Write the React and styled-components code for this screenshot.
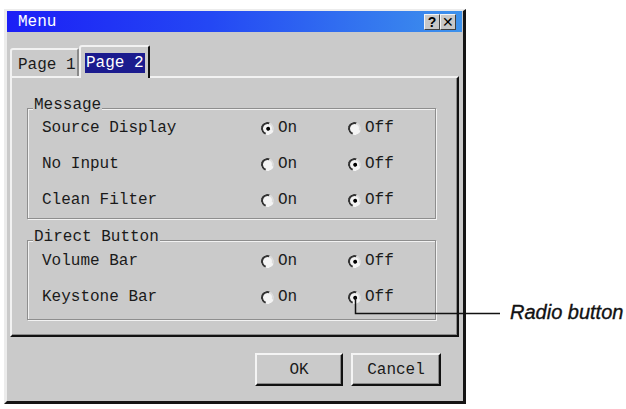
import React from "react";
import styled, { createGlobalStyle } from "styled-components";

const GlobalStyle = createGlobalStyle`
  html, body { margin: 0; padding: 0; background: #ffffff; }
  body { font-family: "Liberation Mono", "DejaVu Sans Mono", monospace; }
  * { box-sizing: border-box; }
`;

const Page = styled.div`
  position: relative;
  width: 626px;
  height: 409px;
  display: flex;
  align-items: flex-start;
  padding: 9px 0 0 4px;
  overflow: hidden;
`;

const Window = styled.div`
  flex: 0 0 462px;
  height: 395px;
  display: flex;
  flex-direction: column;
  background: #cacaca;
  border-style: solid;
  border-width: 2px 3px 3px 3px;
  border-color: #ececec #151515 #151515 #ececec;
  padding: 0 1px 2px 0;
`;

const TitleBar = styled.div`
  height: 21px;
  flex: 0 0 21px;
  display: flex;
  align-items: center;
  justify-content: space-between;
  padding: 1px 6px 0 11px;
  background: linear-gradient(90deg, #1c1ff6 0%, #2448f4 45%, #3d92ec 100%);
`;

const Title = styled.span`
  color: #ffffff;
  font-size: 16px;
  line-height: 18px;
`;

const TitleButtons = styled.div`
  display: flex;
`;

const TitleButton = styled.div`
  width: 16px;
  height: 16px;
  display: flex;
  align-items: center;
  justify-content: center;
  background: #c8c8c8;
  border-style: solid;
  border-width: 1px;
  border-color: #f4f4f4 #404040 #404040 #f4f4f4;
  color: #000;
  font-family: "Liberation Sans", Arial, sans-serif;
  font-weight: ${(p) => (p.$bold ? 700 : 400)};
  font-size: 14px;
  line-height: 14px;
`;

const Body = styled.div`
  flex: 1;
  display: flex;
  flex-direction: column;
  padding: 13px 3px 0 3px;
`;

const TabStrip = styled.div`
  height: 31px;
  flex: 0 0 31px;
  display: flex;
  align-items: flex-end;
  position: relative;
  z-index: 1;
`;

const Tab = styled.div`
  width: ${(p) => (p.$active ? "71px" : "69px")};
  height: ${(p) => (p.$active ? "33px" : "28px")};
  margin-bottom: ${(p) => (p.$active ? "-2px" : "0")};
  display: flex;
  align-items: flex-start;
  padding: ${(p) => (p.$active ? "6px 0 0 4px" : "5px 0 0 5px")};
  background: #cacaca;
  border-style: solid;
  border-width: 2px 2px 0 2px;
  border-color: ${(p) =>
    p.$active ? "#f2f2f2 #111 transparent #f2f2f2" : "#f2f2f2 #8a8a8a transparent #f2f2f2"};
  border-top-left-radius: 3px;
  border-top-right-radius: 2px;
  font-size: 16px;
  line-height: 20px;
  color: #1a1a1a;
`;

const TabLabel = styled.span`
  padding: 0 1px;
  background: ${(p) => (p.$selected ? "#1b1b8e" : "transparent")};
  color: ${(p) => (p.$selected ? "#ffffff" : "#1a1a1a")};
`;

const TabPanel = styled.div`
  flex: 0 0 261px;
  display: flex;
  flex-direction: column;
  gap: 21px;
  padding: 30px 21px 0 15px;
  border-style: solid;
  border-width: 2px;
  border-color: #f2f2f2 #111 #111 #f2f2f2;
  box-shadow: inset -1px -1px 0 #8a8a8a;
`;

const Group = styled.div`
  position: relative;
  border: 1px solid #8e8e8e;
  box-shadow: 1px 1px 0 #f2f2f2, inset 1px 1px 0 #f2f2f2;
  padding: ${(p) => p.$pad};
`;

const Legend = styled.span`
  position: absolute;
  left: 5px;
  top: -13px;
  padding: 0 1px;
  background: #cacaca;
  font-size: 16px;
  line-height: 18px;
  color: #1a1a1a;
`;

const Row = styled.div`
  height: 36px;
  display: grid;
  grid-template-columns: 219px 87px 1fr;
  align-items: center;
  padding-left: 14px;
  font-size: 16px;
  color: #1a1a1a;
`;

const Label = styled.span`
  line-height: 18px;
`;

const Option = styled.span`
  display: inline-flex;
  align-items: center;
  gap: 4px;
  line-height: 18px;
`;

const Circle = styled.span`
  position: relative;
  width: 13px;
  height: 13px;
  border-radius: 50%;
  background: #f4f4f4;
  border: 2px solid;
  border-color: #333 #dcdcdc #f4f4f4 #333;
  transform: rotate(-25deg);

  &::after {
    content: "";
    display: ${(p) => (p.$checked ? "block" : "none")};
    position: absolute;
    left: 2.5px;
    top: 2.5px;
    width: 4px;
    height: 4px;
    border-radius: 50%;
    background: #000;
  }
`;

const ButtonRow = styled.div`
  display: flex;
  justify-content: flex-end;
  gap: 8px;
  padding: 16px 18px 0 0;
`;

const Button = styled.div`
  width: ${(p) => p.$w}px;
  height: 33px;
  display: flex;
  align-items: center;
  justify-content: center;
  background: #cacaca;
  border-style: solid;
  border-width: 2px;
  border-color: #f4f4f4 #111 #111 #f4f4f4;
  box-shadow: inset -1px -1px 0 #8a8a8a;
  font-size: 16px;
  color: #1a1a1a;
`;

const Callout = styled.div`
  margin: 291px 0 0 44px;
  font-family: "Liberation Sans", Arial, sans-serif;
  font-style: italic;
  font-size: 20px;
  line-height: 24px;
  color: #111;
  white-space: nowrap;
  -webkit-text-stroke: 0.35px #111;
`;

const Leader = styled.svg`
  position: absolute;
  left: 0;
  top: 0;
  pointer-events: none;
`;

const Radio = ({ label, checked }) => (
  <Option>
    <Circle $checked={checked} />
    {label}
  </Option>
);

const SettingRow = ({ label, on }) => (
  <Row>
    <Label>{label}</Label>
    <Radio label="On" checked={on} />
    <Radio label="Off" checked={!on} />
  </Row>
);

export default function App() {
  return (
    <>
      <GlobalStyle />
      <Page>
        <Window>
          <TitleBar>
            <Title>Menu</Title>
            <TitleButtons>
              <TitleButton $bold>?</TitleButton>
              <TitleButton>✕</TitleButton>
            </TitleButtons>
          </TitleBar>
          <Body>
            <TabStrip>
              <Tab>
                <TabLabel>Page 1</TabLabel>
              </Tab>
              <Tab $active>
                <TabLabel $selected>Page 2</TabLabel>
              </Tab>
            </TabStrip>
            <TabPanel>
              <Group $pad="1px 0 0 0">
                <Legend>Message</Legend>
                <SettingRow label="Source Display" on />
                <SettingRow label="No Input" on={false} />
                <SettingRow label="Clean Filter" on={false} />
              </Group>
              <Group $pad="2px 0 4px 0">
                <Legend>Direct Button</Legend>
                <SettingRow label="Volume Bar" on={false} />
                <SettingRow label="Keystone Bar" on={false} />
              </Group>
            </TabPanel>
            <ButtonRow>
              <Button $w={88}>OK</Button>
              <Button $w={90}>Cancel</Button>
            </ButtonRow>
          </Body>
        </Window>
        <Callout>Radio button</Callout>
        <Leader width="626" height="409" viewBox="0 0 626 409">
          <path d="M355.5 297 V313.5 H500" fill="none" stroke="#111" strokeWidth="1.5" />
        </Leader>
      </Page>
    </>
  );
}
